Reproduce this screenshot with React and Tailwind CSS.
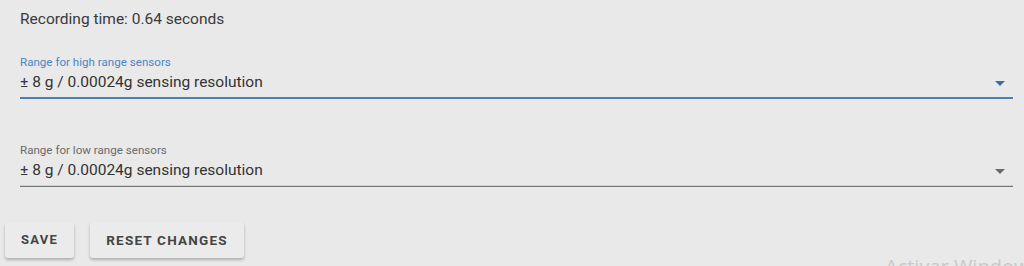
import React from 'react'

function Arrow({ color }) {
  return (
    <svg width="10" height="5" viewBox="0 0 10 5" className="shrink-0">
      <path d="M0 0 L10 0 L5 5 Z" fill={color} />
    </svg>
  )
}

function SelectField({ label, value, focused }) {
  return (
    <div className="flex flex-col">
      <div className={`text-[11.6px] leading-[14px] ${focused ? 'text-[#4a86c5]' : 'text-[#6b6b6b]'}`}>{label}</div>
      <div className="flex items-center justify-between pr-[8px] mt-[3px] h-[22px]">
        <span className="text-[15.5px] text-[#333]">{value}</span>
        <Arrow color={focused ? '#3c6f9e' : '#6a6a6a'} />
      </div>
      {focused ? (
        <div className="h-[2px] bg-[#4a7fb4] mt-[3px]" />
      ) : (
        <div className="h-[2px] mt-[3px] border-b border-[#777] border-t border-t-[#cfcfcf]" />
      )}
    </div>
  )
}

export default function App() {
  return (
    <div className="relative w-[1024px] h-[266px] overflow-hidden bg-[#e9e9e9] font-['Roboto',sans-serif]">
      <div className="pl-[20px] pr-[11px] pt-[9px]">
        <div className="text-[15.5px] text-[#3a3a3a] leading-[20px]">Recording time: 0.64 seconds</div>
        <div className="mt-[26px]">
          <SelectField label="Range for high range sensors" value="± 8 g / 0.00024g sensing resolution" focused />
        </div>
        <div className="mt-[44px]">
          <SelectField label="Range for low range sensors" value="± 8 g / 0.00024g sensing resolution" />
        </div>
      </div>
      <div className="flex gap-[16px] pl-[5px] mt-[35px]">
        <button className="h-[36px] px-[16px] rounded-[3px] bg-[#ebebeb] shadow-[0_2px_3px_rgba(0,0,0,0.25)] text-[13px] font-bold tracking-[1.3px] text-[#444]">SAVE</button>
        <button className="h-[36px] px-[16px] rounded-[3px] bg-[#ebebeb] shadow-[0_2px_3px_rgba(0,0,0,0.25)] text-[13.5px] font-bold tracking-[1.2px] text-[#444]">RESET CHANGES</button>
      </div>
      <div className="absolute left-[885px] top-[252px] text-[20px] text-[#c9c9c9] whitespace-nowrap font-['Open_Sans',sans-serif]">Activar Windows</div>
    </div>
  )
}
